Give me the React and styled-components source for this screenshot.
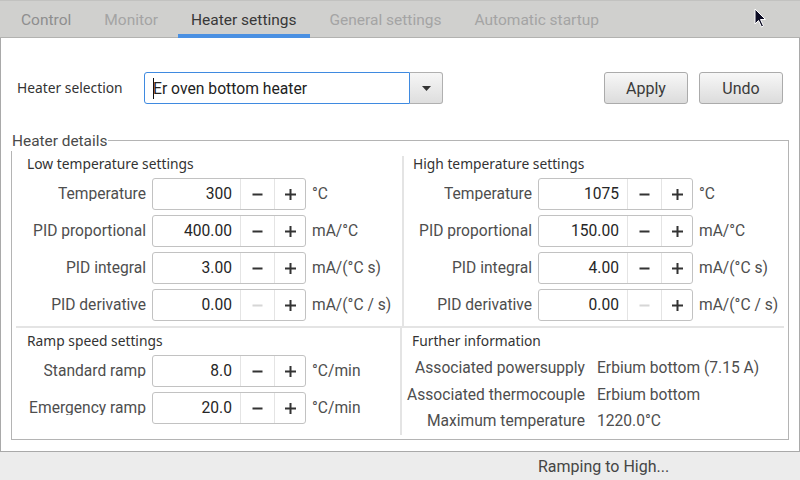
import React from "react";
import styled, { createGlobalStyle } from "styled-components";

const Global = createGlobalStyle`
  html, body { margin: 0; padding: 0; background: #ececec; }
  body { font-family: Roboto, "Liberation Sans", sans-serif; }
  #root { width: 800px; height: 480px; overflow: hidden; }
  * { box-sizing: border-box; }
`;

const Window = styled.div`
  position: relative;
  width: 800px;
  height: 480px;
  display: flex;
  flex-direction: column;
  background: #ececec;
`;

const TabBar = styled.div`
  height: 38px;
  flex: none;
  display: flex;
  gap: 7px;
  padding-left: 8px;
  background: #d0d0ce;
  border-top: 1px solid #c2c2c0;
  border-bottom: 1px solid #b2b2b0;
`;

const Tab = styled.div`
  display: flex;
  align-items: center;
  padding: 4px 13px 0;
  margin-bottom: -1px;
  font-size: 15.5px;
  color: ${(p) => (p.$active ? "#383838" : p.$dim ? "#a4a4a4" : "#8e8e8e")};
  border-bottom: 4px solid ${(p) => (p.$active ? "#4a90e2" : "transparent")};
`;

const Panel = styled.div`
  height: 414px;
  flex: none;
  background: #fff;
  border: 1px solid #a9a9a9;
  border-top: none;
  padding: 34px 0 0;
  display: flex;
  flex-direction: column;
`;

const HeaderRow = styled.div`
  display: flex;
  align-items: center;
  height: 32px;
  padding: 0 16px 0 16px;
`;

const SmallHeading = styled.div`
  font-family: "Noto Sans", "Open Sans", sans-serif;
  font-size: 13.8px;
  line-height: 16px;
  color: #333;
  white-space: nowrap;
`;

const SelectLabel = styled(SmallHeading)`
  width: 127px;
`;

const Combo = styled.div`
  display: flex;
  height: 32px;
  width: 299px;
`;

const ComboEdit = styled.div`
  flex: 1;
  display: flex;
  align-items: center;
  padding-left: 8px;
  border: 1px solid #3f8ae0;
  border-radius: 3px 0 0 3px;
  font-size: 15.7px;
  color: #222;
  background: #fff;
`;

const Caret = styled.span`
  display: inline-block;
  width: 1px;
  height: 21px;
  margin-right: -1px;
  background: #111;
`;

const ComboButton = styled.div`
  width: 33px;
  display: flex;
  align-items: center;
  justify-content: center;
  border: 1px solid #b0b0b0;
  border-left: none;
  border-radius: 0 3px 3px 0;
  background: linear-gradient(#f6f6f6, #dedede);
`;

const Spacer = styled.div`
  flex: 1;
`;

const Button = styled.div`
  width: 84px;
  height: 32px;
  display: flex;
  align-items: center;
  justify-content: center;
  margin-left: ${(p) => p.$ml || 0}px;
  border: 1px solid #ababab;
  border-radius: 3px;
  background: linear-gradient(#f7f7f7, #dcdcdc);
  font-size: 16px;
  color: #3a3a3a;
`;

const GroupBox = styled.div`
  position: relative;
  margin: 36px 10px 0;
  height: 300px;
  border: 1px solid #b4b4b4;
  padding: 15px 4px 4px;
  display: flex;
  flex-direction: column;
`;

const GroupTitle = styled.div`
  position: absolute;
  top: -10px;
  left: -1px;
  padding: 0 1px 0 1px;
  line-height: 20px;
  font-size: 15.4px;
  color: #4a4a4a;
  background: #fff;
`;

const Quads = styled.div`
  display: grid;
  grid-template-columns: ${(p) => p.$left}px 1fr;
  border-bottom: ${(p) => (p.$divider ? "2px solid #e4e4e4" : "none")};
  flex: ${(p) => (p.$grow ? 1 : "none")};
`;

const Column = styled.div`
  display: flex;
  flex-direction: column;
  gap: 5px;
  padding: ${(p) => p.$pt || 0}px 0 ${(p) => p.$pb || 0}px ${(p) => p.$pl}px;
  border-left: ${(p) => (p.$divider ? "2px solid #e4e4e4" : "none")};
`;

const ColHeading = styled(SmallHeading)`
  margin-bottom: 1px;
`;

const Row = styled.div`
  display: grid;
  grid-template-columns: 119px ${(p) => p.$spinW || 154}px auto;
  column-gap: 6px;
  align-items: center;
`;

const Label = styled.div`
  text-align: right;
  font-size: 15.6px;
  line-height: 20px;
  height: 20px;
  color: #4e4e4e;
  white-space: nowrap;
`;

const LabelText = styled.span`
  display: inline-block;
  vertical-align: top;
  height: ${(p) => (p.$clip ? "17px" : "20px")};
  overflow: hidden;
`;

const Unit = styled.div`
  font-size: 15.6px;
  color: #4e4e4e;
  white-space: nowrap;
`;

const SpinBox = styled.div`
  height: 32px;
  display: flex;
  border: 1px solid #c2c2c2;
  border-radius: 3px;
  background: #fff;
`;

const SpinField = styled.div`
  flex: 1;
  display: flex;
  align-items: center;
  justify-content: flex-end;
  padding-right: 8px;
  font-size: 15.6px;
  color: #262626;
`;

const SpinBtn = styled.div`
  width: ${(p) => p.$w}px;
  display: flex;
  align-items: center;
  justify-content: center;
  border-left: 1px solid #e4e4e4;
`;

const InfoGrid = styled.div`
  display: grid;
  grid-template-columns: 183px auto;
  column-gap: 12px;
  grid-auto-rows: 26.5px;
  align-items: center;
  margin-left: -10px;
`;

const InfoText = styled.div`
  font-size: 15.6px;
  color: #4e4e4e;
  white-space: nowrap;
  text-align: ${(p) => (p.$right ? "right" : "left")};
`;

const StatusBar = styled.div`
  flex: 1;
  display: flex;
  align-items: center;
  padding-left: 538px;
  font-size: 16px;
  color: #454545;
`;

const Cursor = styled.svg`
  position: absolute;
  left: 754px;
  top: 8px;
`;

const Minus = ({ disabled }) => (
  <svg width="11" height="11" viewBox="0 0 11 11">
    <rect x="0.5" y="4.5" width="10" height="2" fill={disabled ? "#d6d6d6" : "#333"} />
  </svg>
);

const Plus = () => (
  <svg width="11" height="11" viewBox="0 0 11 11">
    <rect x="0" y="4.5" width="11" height="2" fill="#333" />
    <rect x="4.5" y="0" width="2" height="11" fill="#333" />
  </svg>
);

const Spin = ({ value, minusDisabled }) => (
  <SpinBox>
    <SpinField>{value}</SpinField>
    <SpinBtn $w={34}>
      <Minus disabled={minusDisabled} />
    </SpinBtn>
    <SpinBtn $w={31}>
      <Plus />
    </SpinBtn>
  </SpinBox>
);

const SpinRow = ({ label, value, unit, clip, minusDisabled, spinW }) => (
  <Row $spinW={spinW}>
    <Label>
      <LabelText $clip={clip}>{label}</LabelText>
    </Label>
    <Spin value={value} minusDisabled={minusDisabled} />
    <Unit>{unit}</Unit>
  </Row>
);

const lowRows = [
  { label: "Temperature", value: "300", unit: "°C", clip: true },
  { label: "PID proportional", value: "400.00", unit: "mA/°C" },
  { label: "PID integral", value: "3.00", unit: "mA/(°C s)" },
  { label: "PID derivative", value: "0.00", unit: "mA/(°C / s)", minusDisabled: true },
];

const highRows = [
  { label: "Temperature", value: "1075", unit: "°C", clip: true },
  { label: "PID proportional", value: "150.00", unit: "mA/°C" },
  { label: "PID integral", value: "4.00", unit: "mA/(°C s)" },
  { label: "PID derivative", value: "0.00", unit: "mA/(°C / s)", minusDisabled: true },
];

const rampRows = [
  { label: "Standard ramp", value: "8.0", unit: "°C/min", clip: true },
  { label: "Emergency ramp", value: "20.0", unit: "°C/min", clip: true },
];

const info = [
  ["Associated powersupply", "Erbium bottom (7.15 A)"],
  ["Associated thermocouple", "Erbium bottom"],
  ["Maximum temperature", "1220.0°C"],
];

export default function App() {
  return (
    <Window>
      <Global />
      <TabBar>
        <Tab>Control</Tab>
        <Tab $dim>Monitor</Tab>
        <Tab $active>Heater settings</Tab>
        <Tab $dim>General settings</Tab>
        <Tab $dim>Automatic startup</Tab>
      </TabBar>
      <Panel>
        <HeaderRow>
          <SelectLabel>Heater selection</SelectLabel>
          <Combo>
            <ComboEdit>
              <Caret />
              Er oven bottom heater
            </ComboEdit>
            <ComboButton>
              <svg width="9" height="5" viewBox="0 0 9 5">
                <path d="M0 0 L9 0 L4.5 5 Z" fill="#333" />
              </svg>
            </ComboButton>
          </Combo>
          <Spacer />
          <Button>Apply</Button>
          <Button $ml={11}>Undo</Button>
        </HeaderRow>
        <GroupBox>
          <GroupTitle>Heater details</GroupTitle>
          <Quads $left={386} $divider>
            <Column $pl={11} $pb={5}>
              <ColHeading>Low temperature settings</ColHeading>
              {lowRows.map((r) => (
                <SpinRow key={r.label} {...r} />
              ))}
            </Column>
            <Column $pl={9} $pb={5} $divider>
              <ColHeading>High temperature settings</ColHeading>
              {highRows.map((r) => (
                <SpinRow key={r.label} {...r} spinW={155} />
              ))}
            </Column>
          </Quads>
          <Quads $left={384} $grow>
            <Column $pl={11} $pt={5}>
              <ColHeading>Ramp speed settings</ColHeading>
              {rampRows.map((r) => (
                <SpinRow key={r.label} {...r} />
              ))}
            </Column>
            <Column $pl={10} $pt={5} $divider>
              <ColHeading>Further information</ColHeading>
              <InfoGrid>
                {info.map(([k, v]) => (
                  <React.Fragment key={k}>
                    <InfoText $right>{k}</InfoText>
                    <InfoText>{v}</InfoText>
                  </React.Fragment>
                ))}
              </InfoGrid>
            </Column>
          </Quads>
        </GroupBox>
      </Panel>
      <StatusBar>Ramping to High...</StatusBar>
      <Cursor width="14" height="21" viewBox="0 0 14 21">
        <path
          d="M1 1 L1 16 L4.5 12.5 L7.5 19 L9.5 18 L6.5 11.5 L11.5 11.5 Z"
          fill="#0c0c24"
          stroke="#fff"
          strokeWidth="1"
          strokeLinejoin="round"
        />
      </Cursor>
    </Window>
  );
}
